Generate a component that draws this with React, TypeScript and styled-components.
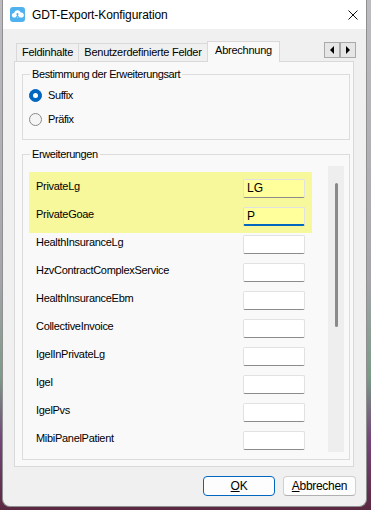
import React from "react"
import styled, { createGlobalStyle } from "styled-components"

const GlobalStyle = createGlobalStyle`
  html, body { margin: 0; padding: 0; }
  body {
    width: 371px;
    height: 510px;
    overflow: hidden;
    background: linear-gradient(180deg, #bdbdc1 0%, #a4a4aa 55%, #7a9a86 74%, #74467a 86%, #5a2840 100%);
    font-family: "Liberation Sans", Arial, sans-serif;
    color: #000;
  }
`

const Window = styled.div`
  box-sizing: border-box;
  width: 365px;
  height: 507px;
  margin-left: 2px;
  display: flex;
  flex-direction: column;
  background: #f0f0f0;
  border: 1px solid #8f8f8f;
  border-top: none;
  border-radius: 0 0 8px 8px;
  overflow: hidden;
`

const TitleBar = styled.div`
  height: 29px;
  flex: none;
  display: flex;
  align-items: center;
  padding: 0 8px 0 7px;
  background: #fff;
`

const TitleText = styled.span`
  flex: 1;
  margin-left: 7px;
  font-size: 12px;
  letter-spacing: -0.1px;
`

const Content = styled.div`
  flex: 1;
  display: flex;
  flex-direction: column;
  padding: 12px 12px 10px 11px;
`

const TabStrip = styled.div`
  height: 20px;
  display: flex;
  align-items: flex-end;
  padding-left: 2px;
`

const Tab = styled.div<{ $width: number; $active?: boolean }>`
  box-sizing: border-box;
  width: ${(p) => p.$width}px;
  height: ${(p) => (p.$active ? 21 : 18)}px;
  margin-left: -1px;
  margin-bottom: ${(p) => (p.$active ? -1 : 0)}px;
  position: relative;
  z-index: ${(p) => (p.$active ? 1 : 0)};
  border: 1px solid #d9d9d9;
  border-bottom: none;
  background: ${(p) => (p.$active ? "#f9f9f9" : "#f0f0f0")};
  font-size: 11px;
  letter-spacing: -0.25px;
  line-height: 17px;
  text-align: center;
  white-space: nowrap;
  &:first-child { margin-left: 0; }
`

const ScrollArrows = styled.div`
  margin-left: auto;
  margin-right: -2px;
  align-self: flex-start;
  margin-top: 1px;
  display: flex;
`

const ArrowButton = styled.div`
  box-sizing: border-box;
  width: 16px;
  height: 16px;
  border: 1px solid #a9a9a9;
  background: #e6e6e6;
  display: flex;
  align-items: center;
  justify-content: center;
`

const Triangle = styled.span<{ $dir: "left" | "right" }>`
  width: 0;
  height: 0;
  border-top: 4px solid transparent;
  border-bottom: 4px solid transparent;
  ${(p) =>
    p.$dir === "left"
      ? "border-right: 4px solid #000;"
      : "border-left: 4px solid #000;"}
`

const Page = styled.div`
  box-sizing: border-box;
  height: 406px;
  border: 1px solid #d9d9d9;
  background: #f9f9f9;
  padding: 5px 3px 6px 7px;
  display: flex;
  flex-direction: column;
  gap: 7px;
`

const Group = styled.fieldset<{ $height?: number }>`
  box-sizing: border-box;
  margin: 0;
  min-width: 0;
  border: 1px solid #dcdcdc;
  display: flex;
  flex-direction: column;
  ${(p) => (p.$height ? `height: ${p.$height}px;` : "flex: 1;")}
`

const RadioGroup = styled(Group)`
  padding: 2px 6px 0 6px;
`

const ListGroup = styled(Group)`
  padding: 5px 5px 4px 6px;
`

const Legend = styled.legend`
  padding: 0 2px;
  margin-left: 1px;
  font-size: 11px;
  line-height: 14px;
  letter-spacing: -0.4px;
`

const RadioRow = styled.label`
  height: 24px;
  display: flex;
  align-items: center;
  gap: 6px;
  font-size: 11px;
  letter-spacing: -0.4px;
`

const RadioDot = styled.span<{ $checked?: boolean }>`
  box-sizing: border-box;
  width: 13px;
  height: 13px;
  border-radius: 50%;
  flex: none;
  display: flex;
  align-items: center;
  justify-content: center;
  background: ${(p) => (p.$checked ? "#0067c0" : "#f5f5f5")};
  border: 1px solid ${(p) => (p.$checked ? "#0067c0" : "#8a8a8a")};
  &::after {
    content: "";
    display: ${(p) => (p.$checked ? "block" : "none")};
    width: 5px;
    height: 5px;
    border-radius: 50%;
    background: #fff;
  }
`

const ListBody = styled.div`
  flex: 1;
  display: flex;
`

const List = styled.div`
  width: 283px;
  margin-right: 16px;
  padding-top: 6px;
  overflow: hidden;
`

const Highlight = styled.div`
  background: #f7f79b;
  padding-bottom: 5px;
  margin-bottom: -5px;
`

const Row = styled.div`
  box-sizing: border-box;
  height: 28px;
  display: flex;
  justify-content: space-between;
  align-items: flex-start;
  padding: 7px 7px 0 7px;
`

const RowLabel = styled.span`
  font-size: 11px;
  line-height: 13px;
  letter-spacing: -0.3px;
  padding-top: 1px;
`

const TextBox = styled.div<{ $yellow?: boolean; $focused?: boolean }>`
  box-sizing: border-box;
  width: 62px;
  height: 19px;
  padding-left: 3px;
  border: 1px solid #e1e1e1;
  border-bottom: ${(p) => (p.$focused ? "2px solid #0067c0" : "1px solid #8b8b8b")};
  border-radius: 2px;
  background: ${(p) => (p.$yellow ? "#ffff9c" : "#fff")};
  font-size: 12px;
  line-height: 17px;
`

const ScrollTrack = styled.div`
  width: 16px;
  background: #eeeeee;
  padding-top: 17px;
`

const ScrollThumb = styled.div`
  width: 3px;
  margin-left: 7px;
  border-radius: 2px;
  background: #8a8a8a;
`

const ButtonRow = styled.div`
  display: flex;
  justify-content: flex-end;
  gap: 8px;
  margin-top: 9px;
  margin-right: -2px;
`

const Button = styled.div<{ $width: number; $primary?: boolean }>`
  box-sizing: border-box;
  width: ${(p) => p.$width}px;
  height: 20px;
  border-radius: 4px;
  background: #fdfdfd;
  border: 1px solid ${(p) => (p.$primary ? "#0067c0" : "#d0d0d0")};
  ${(p) => (p.$primary ? "" : "border-bottom-color: #b0b0b0;")}
  font-size: 12px;
  letter-spacing: -0.3px;
  line-height: 18px;
  text-align: center;
`

const Mnemonic = styled.span`
  text-decoration: underline;
`

const AppIcon = () => (
  <svg width="15" height="15" viewBox="0 0 15 15">
    <rect width="15" height="15" rx="3" fill="#4fb2ee" />
    <path
      d="M3.2 10.5a2.4 2.4 0 0 1 .9-4.6 3.4 3.4 0 0 1 6.6-.3 2.5 2.5 0 0 1 1.2 4.9z"
      fill="#fff"
    />
    <circle cx="7.5" cy="7.2" r="1.1" fill="#4fb2ee" />
    <path d="M5.6 11.5 7.5 8.6 9.4 11.5" stroke="#4fb2ee" strokeWidth="1.1" fill="none" />
  </svg>
)

const CloseIcon = () => (
  <svg width="10" height="10" viewBox="0 0 10 10">
    <path d="M0.5 0.5 9.5 9.5M9.5 0.5 0.5 9.5" stroke="#111" strokeWidth="1" />
  </svg>
)

const rows = [
  { name: "HealthInsuranceLg" },
  { name: "HzvContractComplexService" },
  { name: "HealthInsuranceEbm" },
  { name: "CollectiveInvoice" },
  { name: "IgelInPrivateLg" },
  { name: "Igel" },
  { name: "IgelPvs" },
  { name: "MibiPanelPatient" },
]

export default function App() {
  return (
    <>
      <GlobalStyle />
      <Window>
        <TitleBar>
          <AppIcon />
          <TitleText>GDT-Export-Konfiguration</TitleText>
          <CloseIcon />
        </TitleBar>
        <Content>
          <TabStrip>
            <Tab $width={63}>Feldinhalte</Tab>
            <Tab $width={130}>Benutzerdefinierte Felder</Tab>
            <Tab $width={73} $active>
              Abrechnung
            </Tab>
            <ScrollArrows>
              <ArrowButton>
                <Triangle $dir="left" />
              </ArrowButton>
              <ArrowButton>
                <Triangle $dir="right" />
              </ArrowButton>
            </ScrollArrows>
          </TabStrip>
          <Page>
            <RadioGroup $height={73}>
              <Legend>Bestimmung der Erweiterungsart</Legend>
              <RadioRow>
                <RadioDot $checked />
                Suffix
              </RadioRow>
              <RadioRow>
                <RadioDot />
                Präfix
              </RadioRow>
            </RadioGroup>
            <ListGroup>
              <Legend>Erweiterungen</Legend>
              <ListBody>
                <List>
                  <Highlight>
                    <Row>
                      <RowLabel>PrivateLg</RowLabel>
                      <TextBox $yellow>LG</TextBox>
                    </Row>
                    <Row>
                      <RowLabel>PrivateGoae</RowLabel>
                      <TextBox $yellow $focused>
                        P
                      </TextBox>
                    </Row>
                  </Highlight>
                  {rows.map((r) => (
                    <Row key={r.name}>
                      <RowLabel>{r.name}</RowLabel>
                      <TextBox />
                    </Row>
                  ))}
                </List>
                <ScrollTrack>
                  <ScrollThumb style={{ height: 144 }} />
                </ScrollTrack>
              </ListBody>
            </ListGroup>
          </Page>
          <ButtonRow>
            <Button $width={72} $primary>
              <Mnemonic>O</Mnemonic>K
            </Button>
            <Button $width={73}>
              <Mnemonic>A</Mnemonic>bbrechen
            </Button>
          </ButtonRow>
        </Content>
      </Window>
    </>
  )
}
